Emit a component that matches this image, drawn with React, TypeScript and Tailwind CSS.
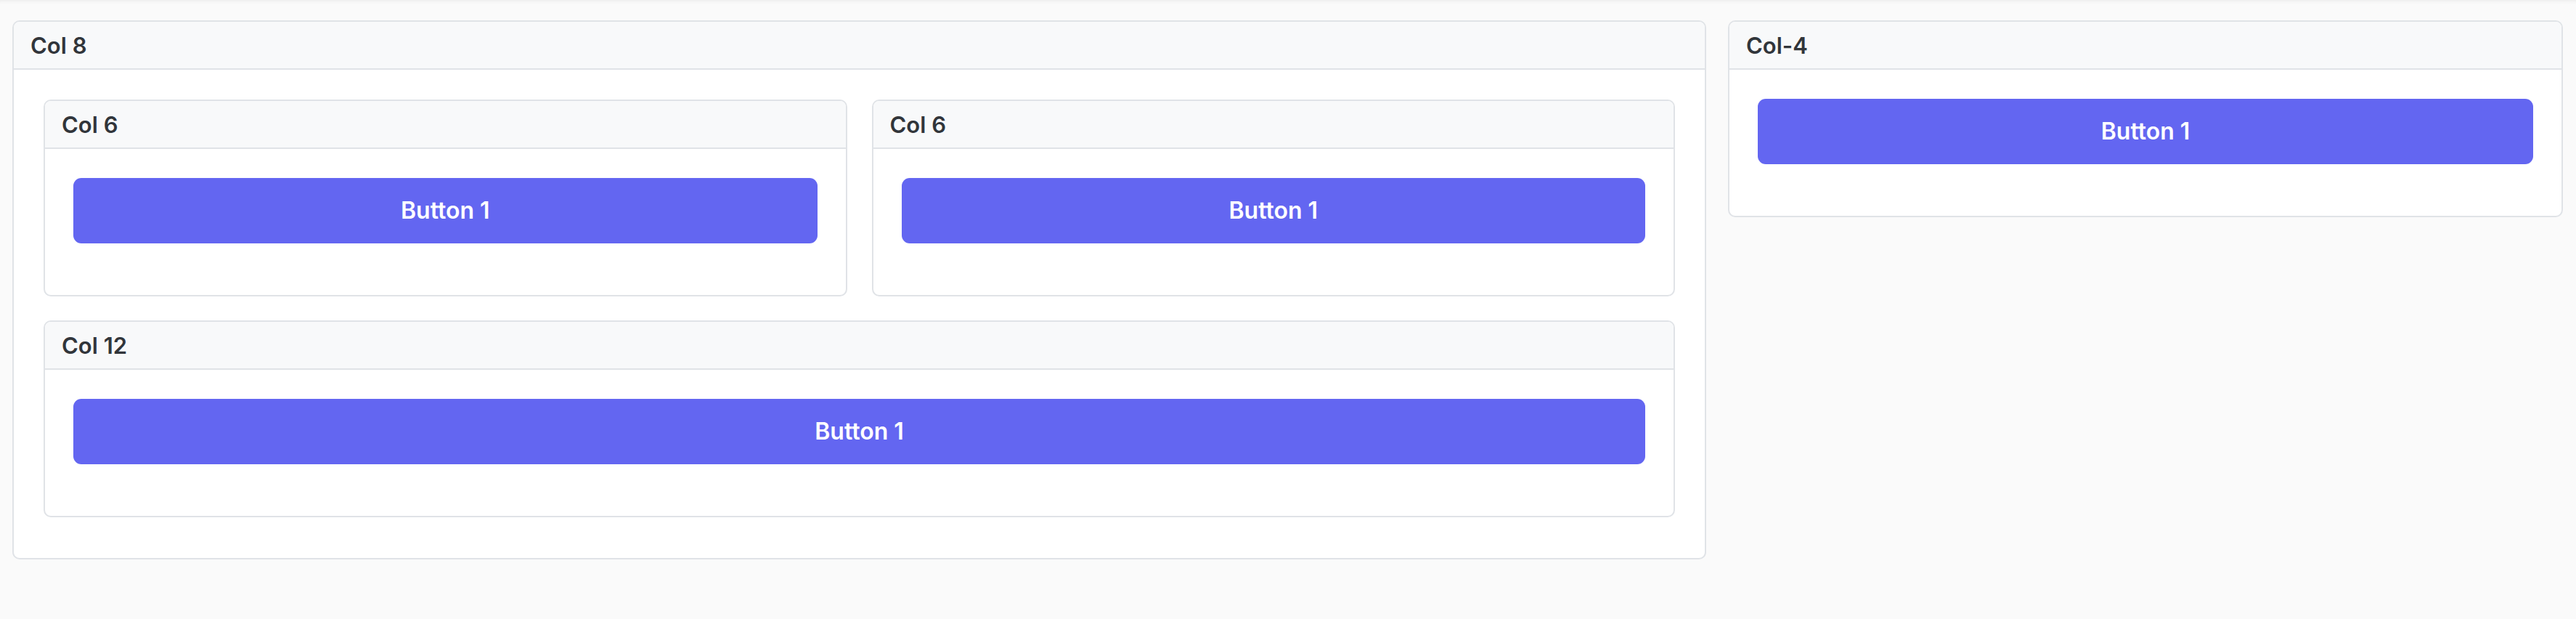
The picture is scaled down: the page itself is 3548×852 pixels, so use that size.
import React from "react";

const font = { fontFamily: "Inter, 'Noto Sans', 'Liberation Sans', sans-serif" };

function Card({
  title,
  children,
}: {
  title: string;
  children: React.ReactNode;
}) {
  return (
    <div className="bg-white border-2 border-[#e0e3e7] rounded-[10px] overflow-hidden w-full">
      <div className="h-[64px] box-content border-b-2 border-[#e0e3e7] bg-[#f8f9fa] flex items-center pl-[23px]">
        <span className="text-[31px] font-semibold text-[#31353a] leading-none">{title}</span>
      </div>
      {children}
    </div>
  );
}

function Btn() {
  return (
    <button className="w-full h-[90px] rounded-[11px] bg-[#6366f1] text-white text-[32px] font-semibold leading-none flex items-center justify-center">
      Button 1
    </button>
  );
}

export default function App() {
  return (
    <div
      style={font}
      className="min-h-[852px] w-full bg-[#fafafa] shadow-[inset_0_6px_6px_-6px_rgba(0,0,0,0.10)] pt-[28px] pl-[17px] pr-[18px]"
    >
      <div className="grid grid-cols-[2333px_1fr] gap-[30px] items-start">
        <Card title="Col 8">
          <div className="pt-[41px] pl-[41px] pr-[41px] pb-[56px] flex flex-col gap-[33px]">
            <div className="grid grid-cols-2 gap-[34px] items-start">
              <Card title="Col 6">
                <div className="pt-[40px] px-[39px] pb-[71px]">
                  <Btn />
                </div>
              </Card>
              <Card title="Col 6">
                <div className="pt-[40px] px-[39px] pb-[71px]">
                  <Btn />
                </div>
              </Card>
            </div>
            <Card title="Col 12">
              <div className="pt-[40px] px-[39px] pb-[71px]">
                <Btn />
              </div>
            </Card>
          </div>
        </Card>
        <Card title="Col-4">
          <div className="pt-[40px] px-[39px] pb-[71px]">
            <Btn />
          </div>
        </Card>
      </div>
    </div>
  );
}
